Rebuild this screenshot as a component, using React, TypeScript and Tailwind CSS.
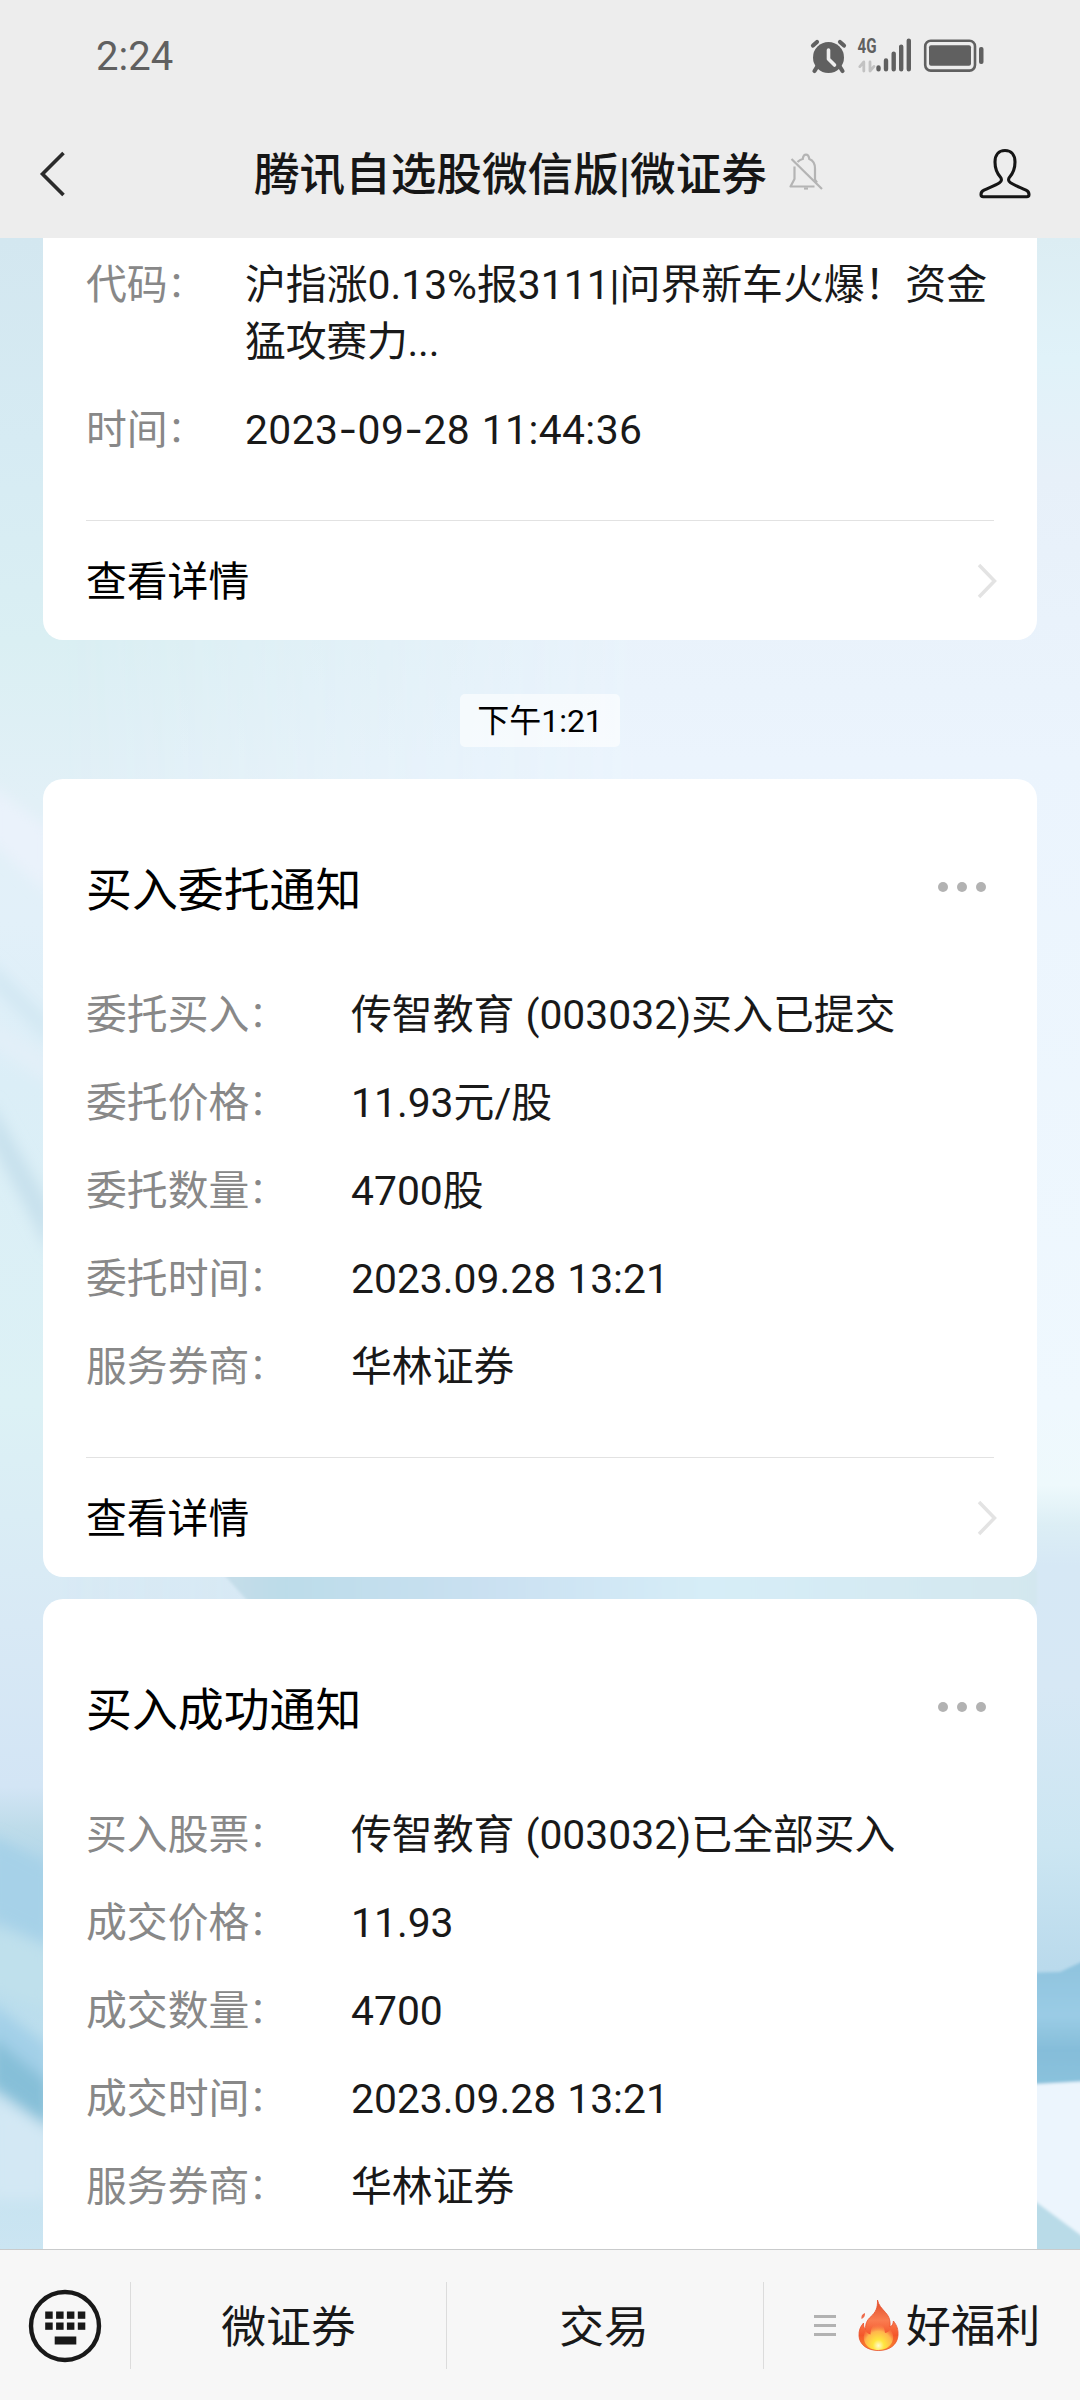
import type { ReactNode } from "react";

type Row = { label: string; value: ReactNode };

const articleRows: Row[] = [
  {
    label: "代码",
    value: (
      <>
        沪指涨0.13%报3111|问界新车火爆！资金
        <br />
        <span className="tracking-[-0.2px]">猛攻赛力...</span>
      </>
    ),
  },
  {
    label: "时间",
    value: (
      <span className="tracking-[0.4px]">
        2023<Dash />09<Dash />28 11:44:36
      </span>
    ),
  },
];

const orderRows: Row[] = [
  { label: "委托买入", value: "传智教育 (003032)买入已提交" },
  { label: "委托价格", value: "11.93元/股" },
  { label: "委托数量", value: "4700股" },
  { label: "委托时间", value: "2023.09.28 13:21" },
  { label: "服务券商", value: "华林证券" },
];

const dealRows: Row[] = [
  { label: "买入股票", value: "传智教育 (003032)已全部买入" },
  { label: "成交价格", value: "11.93" },
  { label: "成交数量", value: "4700" },
  { label: "成交时间", value: "2023.09.28 13:21" },
  { label: "服务券商", value: "华林证券" },
];

function Dash() {
  return <span className="font-[Inter,sans-serif] leading-none">-</span>;
}

function StatusIcons() {
  return (
    <svg width="180" height="40" viewBox="808 34 180 40" fill="none">
      {/* alarm */}
      <circle cx="828.5" cy="56.5" r="15.5" fill="#606060" />
      <path
        d="M813 44.500l4-3.500M844 44.500l-4-3.500M817 66l-2.500 4M840 66l2.500 4"
        stroke="#606060"
        strokeWidth="4.2"
        strokeLinecap="round"
      />
      <path
        d="M828.5 49v9l6 6"
        stroke="#ededed"
        strokeWidth="3.6"
        strokeLinecap="round"
        strokeLinejoin="round"
      />
      {/* network */}
      <text
        x="857.5"
        y="52"
        fontSize="20"
        fontWeight="700"
        textLength="19"
        lengthAdjust="spacingAndGlyphs"
        fill="#606060"
      >
        4G
      </text>
      <path
        d="M863.8 70V61l-4 4.6M870 61v9l4-4.6"
        stroke="#c2c2c2"
        strokeWidth="2.8"
        strokeLinecap="round"
        strokeLinejoin="round"
      />
      <path
        d="M878.5 66.5v1.700M886 59.500v8.700M893.7 52.600v15.600M901.2 45.600v22.600M908.8 39.600v28.600"
        stroke="#606060"
        strokeWidth="4.4"
        strokeLinecap="round"
      />
      {/* battery */}
      <rect
        x="925.2"
        y="39.8"
        width="49.8"
        height="29.8"
        rx="5.5"
        stroke="#606060"
        strokeWidth="2.6"
      />
      <rect x="929" y="44.3" width="42" height="20.4" rx="2" fill="#606060" />
      <rect x="979" y="46" width="4.5" height="17" rx="2" fill="#606060" />
    </svg>
  );
}

function BellOffIcon() {
  return (
    <svg
      width="36"
      height="40"
      viewBox="790 153 36 40"
      fill="none"
      stroke="#b4b4b4"
      strokeWidth="2.2"
      className="mb-[4px] ml-[22px]"
    >
      <path d="M792.5 160l30.500 30" />
      <path d="M795.500 167.500v12.500l-4 7.500h24" strokeLinejoin="round" />
      <path d="M798.500 163c1.500-1.500 3.200-2.500 5.200-3 .5-3.200 1.500-4.300 3.300-4.300s2.800 1.100 3.300 4.300c4.500 1.800 5.700 5 5.700 9.500v11l2 3" />
      <path d="M805 189.500h4" />
    </svg>
  );
}

function PersonIcon() {
  return (
    <svg width="56" height="54" viewBox="977 147 56 54" fill="none">
      <path
        d="M1005 150.500c-6.500 0-10 4.700-10 11.500 0 7 2.300 11.500 5.300 15 1.700 2 1.500 4.300-.8 5.800-4 2.600-9.800 4.700-15.500 7.400-2.200 1-3 2.300-3 4.300 0 1.500.7 2.200 2.200 2.200h43.600c1.500 0 2.200-.7 2.200-2.200 0-2-.8-3.300-3-4.300-5.700-2.700-11.500-4.800-15.500-7.400-2.300-1.500-2.500-3.800-.8-5.800 3-3.500 5.300-8 5.300-15 0-6.800-3.500-11.500-10-11.500z"
        stroke="#161616"
        strokeWidth="3.1"
        strokeLinejoin="round"
      />
    </svg>
  );
}

function KeyboardIcon() {
  return (
    <svg width="74" height="74" viewBox="0 0 74 74" fill="#191919">
      <circle cx="37" cy="37" r="34" fill="none" stroke="#191919" strokeWidth="4.4" />
      {[17.2, 28.1, 38.9, 49.8].map((x) => (
        <g key={x}>
          <rect x={x} y="22.5" width="7.5" height="7.3" />
          <rect x={x} y="33.5" width="7.5" height="7.3" />
        </g>
      ))}
      <rect x="26.7" y="47.5" width="21.6" height="8" />
    </svg>
  );
}

function FireIcon() {
  return (
    <svg width="41" height="52" viewBox="0 0 41 52" className="mb-[2px]">
      <defs>
        <linearGradient id="flame" x1="0" y1="0" x2="0" y2="1">
          <stop offset="0" stopColor="#dd4a2a" />
          <stop offset=".4" stopColor="#fa7c50" />
          <stop offset=".7" stopColor="#f4562a" />
          <stop offset="1" stopColor="#f98a2f" />
        </linearGradient>
        <radialGradient id="core" cx=".5" cy=".86" r=".68">
          <stop offset="0" stopColor="#fffbd0" />
          <stop offset=".28" stopColor="#ffe63e" />
          <stop offset=".68" stopColor="#ffb64c" />
          <stop offset="1" stopColor="#fb8a50" stopOpacity="0" />
        </radialGradient>
      </defs>
      <path
        d="M19.500 1c1 5 4 8 8 12.500 4 4.500 5 8.500 4.500 14.500 2.200-1 3.200-3 3.400-6 3.600 4.500 5.100 9 4.600 14.500C39.300 45.500 32 51.500 20.500 51.500S1.500 45.500 1 37c-.3-5.500 1.300-9.300 4.500-13-.2 3 .5 5 2 6.500C7.500 25 8.500 21.500 13 17.500c4.500-4 6.800-8.500 6.500-16.500z"
        fill="url(#flame)"
        stroke="#e8502b"
        strokeWidth=".8"
      />
      <path d="M7 14c-3 1-4 3-3.500 6C6 19 7.300 17 7 14z" fill="#ee6a4a" />
      <path
        d="M20 20c4 4 6.500 8 7 14 2.500-.5 4-1.500 5.500-3.500 3 4 3.500 9 1.500 13-2.200 4.500-7 7.500-13.500 7.500S9.500 48.500 7 44c-2-4-1.500-8.500.5-12 1.500 2 3 3 5 3.500C12.500 29 16 25 20 20z"
        fill="url(#core)"
      />
    </svg>
  );
}

function Wallpaper() {
  return (
    <svg
      className="absolute inset-0 h-full w-full"
      viewBox="0 238 1080 2011"
      preserveAspectRatio="none"
    >
      <defs>
        <linearGradient id="left" x1="0" y1="238" x2="0" y2="2249" gradientUnits="userSpaceOnUse">
          <stop offset="0" stopColor="#d3e7f0" />
          <stop offset=".1" stopColor="#d6ebf3" />
          <stop offset=".2" stopColor="#daeff3" />
          <stop offset=".28" stopColor="#e2f0f7" />
          <stop offset=".34" stopColor="#e2f0f9" />
          <stop offset=".42" stopColor="#dbeef7" />
          <stop offset=".58" stopColor="#dcf1f5" />
          <stop offset=".69" stopColor="#d8e9f5" />
          <stop offset=".77" stopColor="#d3e5f5" />
          <stop offset=".79" stopColor="#bedcea" />
          <stop offset=".82" stopColor="#abd3e8" />
          <stop offset=".86" stopColor="#b8dcec" />
          <stop offset="1" stopColor="#cbe5f2" />
        </linearGradient>
        <linearGradient id="right" x1="0" y1="238" x2="0" y2="2249" gradientUnits="userSpaceOnUse">
          <stop offset="0" stopColor="#dcedf3" />
          <stop offset=".06" stopColor="#e0f2f9" />
          <stop offset=".12" stopColor="#e7f0f9" />
          <stop offset=".26" stopColor="#ebf4fd" />
          <stop offset=".58" stopColor="#eff8fe" />
          <stop offset=".62" stopColor="#eef9fc" />
          <stop offset=".64" stopColor="#dceef5" />
          <stop offset=".66" stopColor="#d6e8f5" />
          <stop offset=".72" stopColor="#d7e8f5" />
          <stop offset=".8" stopColor="#cce6f2" />
          <stop offset=".86" stopColor="#badaec" />
          <stop offset="1" stopColor="#badaec" />
        </linearGradient>
        <linearGradient id="fade" x1="0" y1="0" x2="1080" y2="0" gradientUnits="userSpaceOnUse">
          <stop offset=".05" stopColor="#fff" stopOpacity="0" />
          <stop offset=".6" stopColor="#fff" />
        </linearGradient>
        <linearGradient id="sea" x1="0" y1="1970" x2="0" y2="2084" gradientUnits="userSpaceOnUse">
          <stop offset="0" stopColor="#90c4df" />
          <stop offset=".4" stopColor="#9acce5" />
          <stop offset=".7" stopColor="#85bdd9" />
          <stop offset="1" stopColor="#8ac2dc" />
        </linearGradient>
        <linearGradient id="seam" x1="220" y1="0" x2="1037" y2="0" gradientUnits="userSpaceOnUse">
          <stop offset="0" stopColor="#c6dde9" />
          <stop offset=".08" stopColor="#bcdce9" />
          <stop offset=".35" stopColor="#cbe1f2" />
          <stop offset=".6" stopColor="#d6edf7" />
          <stop offset="1" stopColor="#d3e7ef" />
        </linearGradient>
        <mask id="toRight">
          <rect y="238" width="1080" height="2011" fill="url(#fade)" />
        </mask>
        <filter id="soft" x="-50%" y="-50%" width="200%" height="200%">
          <feGaussianBlur stdDeviation="7" />
        </filter>
        <filter id="edge">
          <feGaussianBlur stdDeviation="1.5" />
        </filter>
      </defs>
      <rect y="238" width="1080" height="2011" fill="url(#left)" />
      <rect y="238" width="1080" height="2011" fill="url(#right)" mask="url(#toRight)" />
      <path d="M220 1570h817v36H252z" fill="url(#seam)" filter="url(#edge)" />
      <g filter="url(#soft)">
        <path d="M-10 785l60 45v65L-10 840z" fill="#eaf2fb" />
        <path d="M-10 960l60 60v25L-10 985z" fill="#d3e8f3" />
        <path d="M-10 1020l60 35v30L-10 1045z" fill="#e2eff8" />
        <path d="M-10 1100l60 105v50L-10 1140z" fill="#c8e1ed" />
        <path d="M-10 1835l60 30v80L-10 1915z" fill="#a6d1e8" />
        <path d="M-10 1925l60 25v60L-10 1990z" fill="#bfe0ec" />
        <path d="M-10 2002l60 45v40L-10 2040z" fill="#a3d0e8" />
        <path d="M-10 2035l60 48v45L-10 2085z" fill="#86bfd8" />
        <path d="M-10 2094l60 36v70L-10 2200z" fill="#d3e8f4" />
      </g>
      <g filter="url(#edge)">
        <path d="M1020 1973l40-1 30-14v125l-70 3z" fill="url(#sea)" />
        <path d="M1020 2085l70-4v160l-70-40z" fill="#ecf5fd" />
        <path d="M1020 2190l70 52v30h-70z" fill="#b9dbe8" />
      </g>
    </svg>
  );
}

function InfoRows({ rows, labelWidth }: { rows: Row[]; labelWidth: string }) {
  return (
    <dl className="flex flex-col gap-[31px] text-[40.85px] leading-[57px]">
      {rows.map((row) => (
        <div key={row.label} className="flex whitespace-nowrap">
          <dt className={`${labelWidth} flex shrink-0 text-[#888888]`}>
            <span>{row.label}</span>
            <span className="text-[35px]">：</span>
          </dt>
          <dd className="text-[#191919] [word-spacing:1px]">{row.value}</dd>
        </div>
      ))}
    </dl>
  );
}

function DetailLink() {
  return (
    <div className="flex h-[120px] items-center justify-between border-t border-[#e2e2e2]">
      <span className="pt-[4px] text-[40.8px] leading-[57px] text-black">查看详情</span>
      <svg width="20" height="38" viewBox="0 0 20 38" fill="none" className="-mr-[3px]">
        <path d="M2 3l15.5 16L2 35" stroke="#e3e3e3" strokeWidth="3.5" />
      </svg>
    </div>
  );
}

function CardHeader({ title }: { title: string }) {
  return (
    <div className="flex h-[66px] items-center justify-between">
      <h2 className="text-[45.9px] leading-[66px] text-black">{title}</h2>
      <div className="mr-[8px] flex gap-[9px] pb-[7px]">
        <span className="size-[10px] rounded-full bg-[#b2b2b2]" />
        <span className="size-[10px] rounded-full bg-[#b2b2b2]" />
        <span className="size-[10px] rounded-full bg-[#b2b2b2]" />
      </div>
    </div>
  );
}

export default function App() {
  return (
    <div className="flex h-[2400px] w-[1080px] flex-col overflow-hidden bg-[#ededed] font-[Roboto,'Noto_Sans_CJK_SC',sans-serif]">
      <header className="h-[238px] shrink-0">
        <div className="flex h-[110px] items-center justify-between pr-[92px] pl-[96px]">
          <span className="pt-[3px] text-[40px] leading-[48px] text-[#606060]">2:24</span>
          <StatusIcons />
        </div>
        <div className="flex h-[128px] items-center pr-[47px] pl-[38px]">
          <svg width="30" height="48" viewBox="0 0 30 48" fill="none">
            <path d="M25.5 3L4.5 24l21 21" stroke="#2b2b2b" strokeWidth="3.6" />
          </svg>
          <div className="ml-[186px] flex flex-1 items-center">
            <h1 className="pt-[3px] text-[45.6px] leading-[64px] font-medium whitespace-nowrap text-[#161616]">
              腾讯自选股微信版|微证券
            </h1>
            <BellOffIcon />
          </div>
          <PersonIcon />
        </div>
      </header>

      <main className="relative h-[2011px] shrink-0 overflow-hidden">
        <Wallpaper />
        <div className="relative flex h-full flex-col px-[43px]">
          <section className="h-[402px] rounded-b-[20px] bg-white px-[43px] pt-[19px]">
            <InfoRows rows={articleRows} labelWidth="w-[159px]" />
            <div className="mt-[61px]">
              <DetailLink />
            </div>
          </section>

          <div className="flex h-[139px] items-start justify-center pt-[54px]">
            <span className="rounded-[5px] bg-white/60 px-[17px] pt-[5px] pb-[3px] text-[32px] leading-[45px] text-black">
              下午1:21
            </span>
          </div>

          <section className="rounded-[20px] bg-white px-[43px] pt-[78px]">
            <CardHeader title="买入委托通知" />
            <div className="mt-[64px] mb-[61px]">
              <InfoRows rows={orderRows} labelWidth="w-[265px]" />
            </div>
            <DetailLink />
          </section>

          <section className="mt-[22px] flex-1 rounded-t-[20px] bg-white px-[43px] pt-[78px]">
            <CardHeader title="买入成功通知" />
            <div className="mt-[64px]">
              <InfoRows rows={dealRows} labelWidth="w-[265px]" />
            </div>
          </section>
        </div>
      </main>

      <nav className="flex h-[151px] shrink-0 border-t border-[#c9cbcc] bg-[#f7f7f7] pt-[32px] text-[44.8px] leading-[91px] text-[#191919]">
        <div className="flex h-[87px] w-[130px] items-center justify-center">
          <KeyboardIcon />
        </div>
        <div className="h-[87px] w-[316px] border-l border-[#dcdcdc] text-center">微证券</div>
        <div className="h-[87px] w-[317px] border-l border-[#dcdcdc] pr-[2px] text-center">
          交易
        </div>
        <div className="flex h-[87px] flex-1 items-center border-l border-[#dcdcdc] pl-[50px]">
          <div className="flex flex-col gap-[6px]">
            <span className="h-[3px] w-[22px] bg-[#b2b2b2]" />
            <span className="h-[3px] w-[22px] bg-[#b2b2b2]" />
            <span className="h-[3px] w-[22px] bg-[#b2b2b2]" />
          </div>
          <div className="ml-[22px] flex items-center">
            <FireIcon />
            <span className="ml-[7px] pt-[2px]">好福利</span>
          </div>
        </div>
      </nav>
    </div>
  );
}
